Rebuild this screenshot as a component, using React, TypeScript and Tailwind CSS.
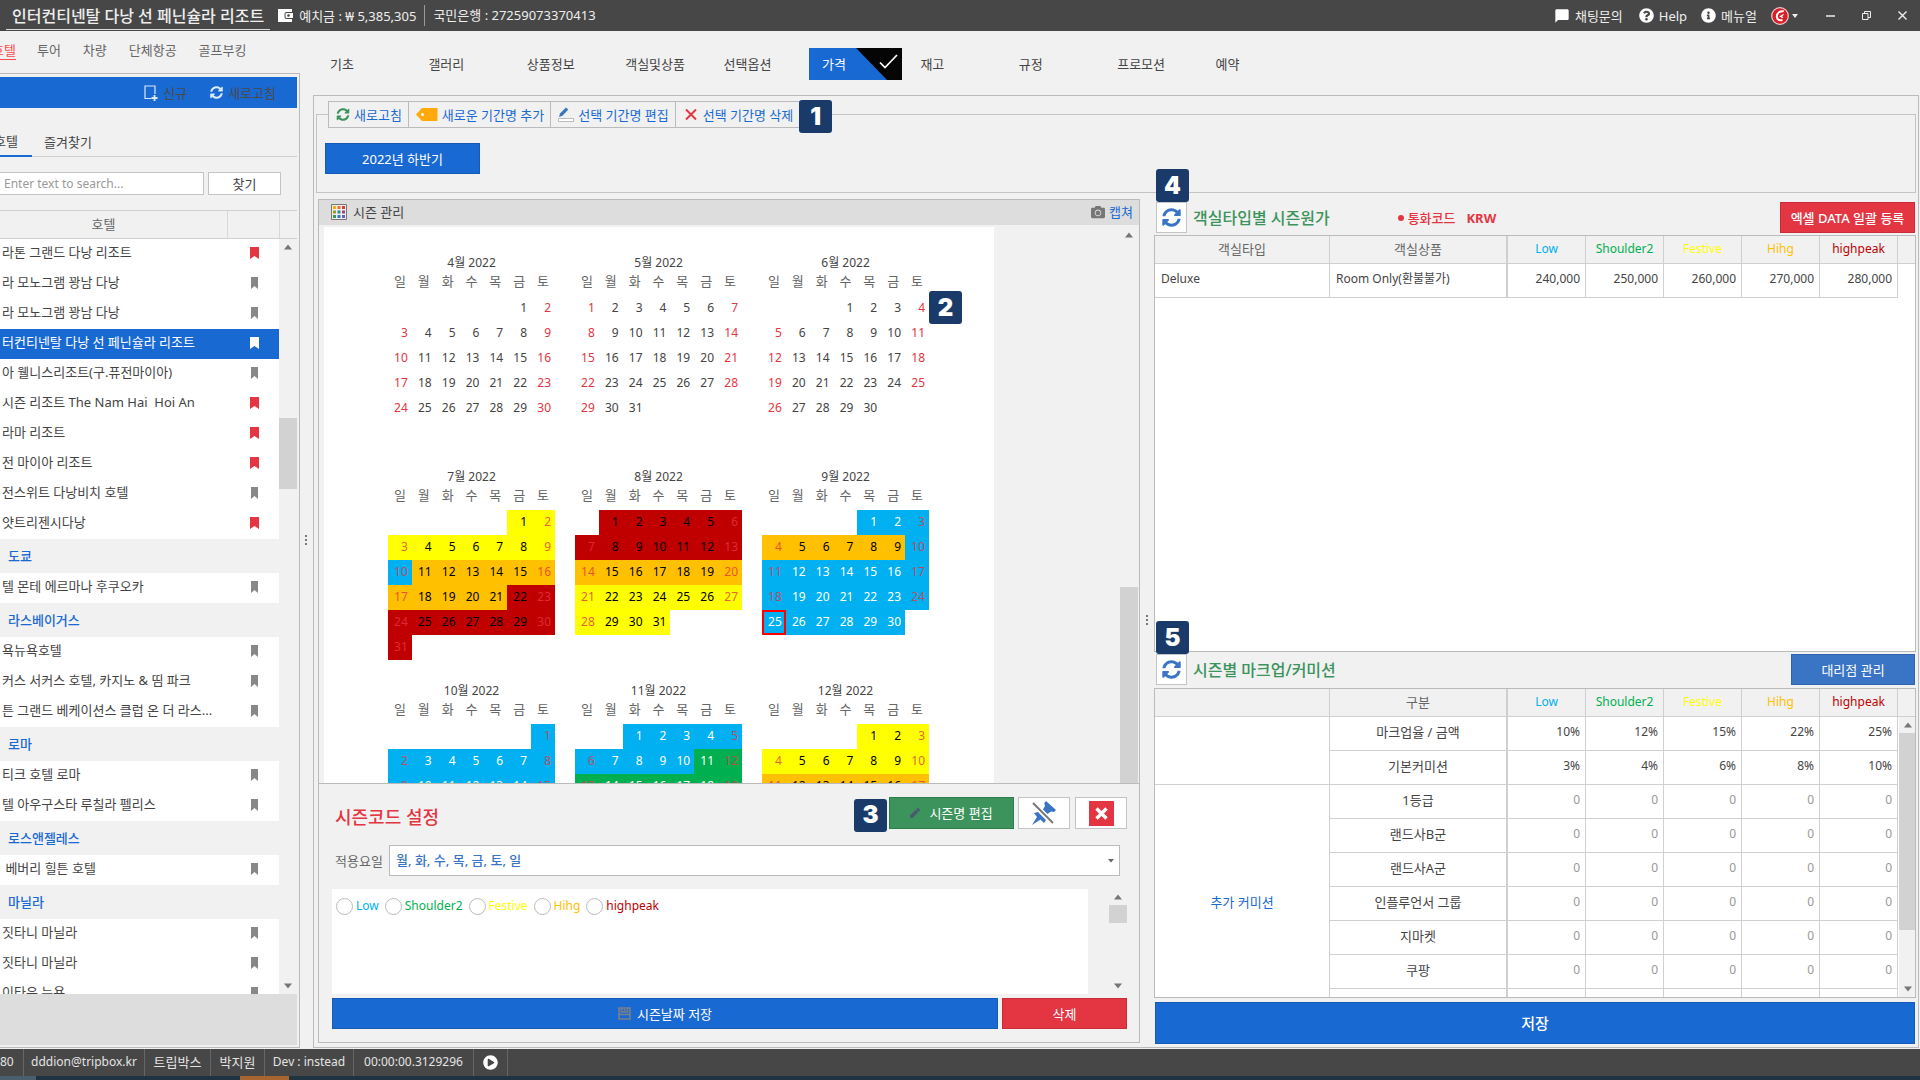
import { useState } from "react";
import type { ReactNode } from "react";
import clsx from "clsx";
import {
  FaCamera,
  FaInfoCircle,
  FaPen,
  FaPlayCircle,
  FaQuestionCircle,
  FaSyncAlt,
} from "react-icons/fa";
import { MdChatBubble } from "react-icons/md";

type Season = { name: string; text: string };

const SEASONS: Season[] = [
  { name: "Low", text: "text-[#00b0f0]" },
  { name: "Shoulder2", text: "text-[#00b050]" },
  { name: "Festive", text: "text-[#ffff00]" },
  { name: "Hihg", text: "text-[#ffc000]" },
  { name: "highpeak", text: "text-[#c00000]" },
];

const WEEKDAYS = ["일", "월", "화", "수", "목", "금", "토"];

const LOW = "bg-[#00b0f0] text-white";
const SHOULDER = "bg-[#00b050] text-white";
const FESTIVE = "bg-[#ffff00] text-black";
const HIGH = "bg-[#ffc000] text-black";
const PEAK = "bg-[#c00000] text-black";

// month -> [last day of range, cell colour]
const RANGES: Record<number, [number, string][]> = {
  7: [[9, FESTIVE], [10, LOW], [21, HIGH], [31, PEAK]],
  8: [[13, PEAK], [20, HIGH], [31, FESTIVE]],
  9: [[3, LOW], [9, HIGH], [30, LOW]],
  10: [[31, LOW]],
  11: [[10, LOW], [30, SHOULDER]],
  12: [[10, FESTIVE], [31, HIGH]],
};

type Row = { name: string; mark?: "red" | "gray" };
type Group = { title?: string; rows: Row[] };

const HOTELS: Group[] = [
  {
    rows: [
      { name: "라톤 그랜드 다낭 리조트", mark: "red" },
      { name: "라 모노그램 꽝남 다낭" },
      { name: "라 모노그램 꽝남 다낭" },
      { name: "터컨티넨탈 다낭 선 페닌슐라 리조트" },
      { name: "아 웰니스리조트(구.퓨전마이아)" },
      { name: "시즌 리조트 The Nam Hai  Hoi An", mark: "red" },
      { name: "라마 리조트", mark: "red" },
      { name: "전 마이아 리조트", mark: "red" },
      { name: "전스위트 다낭비치 호텔" },
      { name: "얏트리젠시다낭", mark: "red" },
    ],
  },
  { title: "도쿄", rows: [{ name: "텔 몬테 에르마나 후쿠오카" }] },
  {
    title: "라스베이거스",
    rows: [
      { name: "욕뉴욕호텔" },
      { name: "커스 서커스 호텔, 카지노 & 띰 파크" },
      { name: "튼 그랜드 베케이션스 클럽 온 더 라스..." },
    ],
  },
  { title: "로마", rows: [{ name: "티크 호텔 로마" }, { name: "텔 아우구스타 루칠라 펠리스" }] },
  { title: "로스앤젤레스", rows: [{ name: " 베버리 힐튼 호텔" }] },
  {
    title: "마닐라",
    rows: [{ name: "짓타니 마닐라" }, { name: "짓타니 마닐라" }, { name: "이타우 뉴욕" }],
  },
];

const MENU = ["기초", "갤러리", "상품정보", "객실및상품", "선택옵션", "가격", "재고", "규정", "프로모션", "예약"];

const MARKUP: { name: string; values: string[] }[] = [
  { name: "마크업율 / 금액", values: ["10%", "12%", "15%", "22%", "25%"] },
  { name: "기본커미션", values: ["3%", "4%", "6%", "8%", "10%"] },
  { name: "1등급", values: ["0", "0", "0", "0", "0"] },
  { name: "랜드사B군", values: ["0", "0", "0", "0", "0"] },
  { name: "랜드사A군", values: ["0", "0", "0", "0", "0"] },
  { name: "인플루언서 그룹", values: ["0", "0", "0", "0", "0"] },
  { name: "지마켓", values: ["0", "0", "0", "0", "0"] },
  { name: "쿠팡", values: ["0", "0", "0", "0", "0"] },
  { name: "", values: ["", "", "", "", ""] },
];

function Callout({ n, className }: { n: number; className?: string }) {
  return (
    <span
      className={clsx(
        "z-10 flex h-[33px] w-[33px] items-center justify-center rounded-[3px] bg-[#1a3a69] font-['Inter'] text-2xl font-black text-white",
        className
      )}
    >
      {n}
    </span>
  );
}

function Arrow({ down }: { down?: boolean }) {
  return (
    <span className="flex h-4 shrink-0 items-center justify-center">
      <svg width="8" height="6" viewBox="0 0 8 6" fill="#777">
        <path d={down ? "M0 0.5h8L4 5.5z" : "M0 5.5h8L4 0.5z"} />
      </svg>
    </span>
  );
}

function Scrollbar({ thumb, open, className }: { thumb: string; open?: boolean; className?: string }) {
  return (
    <div className={clsx("flex w-[18px] shrink-0 flex-col bg-[#f1f1f1]", className)}>
      <Arrow />
      <div className={clsx("bg-[#d2d2d2]", thumb)} />
      {!open && (
        <div className="mt-auto">
          <Arrow down />
        </div>
      )}
    </div>
  );
}

function Dots() {
  return (
    <div className="flex flex-col gap-[2px]">
      <i className="h-[2px] w-[2px] bg-[#777]" />
      <i className="h-[2px] w-[2px] bg-[#777]" />
      <i className="h-[2px] w-[2px] bg-[#777]" />
    </div>
  );
}

function TopBar() {
  return (
    <header className="flex h-[31px] shrink-0 items-center bg-[#474747] text-[#eee]">
      <h1 className="ml-[6px] mt-px flex h-[28px] items-center border-b border-[#ddd] px-[6px] text-base font-medium">
        인터컨티넨탈 다낭 선 페닌슐라 리조트
      </h1>
      <svg className="ml-2" width="15" height="13" viewBox="0 0 15 13">
        <path d="M0 0h14v3H8.500a2 2 0 0 0-2 2v3a2 2 0 0 0 2 2H14v3H0z" fill="#fff" />
        <path d="M8.500 4H15v5H8.500a1 1 0 0 1-1-1V5a1 1 0 0 1 1-1z" fill="#fff" />
        <circle cx="10.500" cy="6.500" r="1.300" fill="#474747" />
      </svg>
      <span className="ml-[6px]">예치금 : ₩ 5,385,305</span>
      <span className="ml-2 h-[21px] border-l border-[#999] pl-2 leading-[21px]">국민은행 : 27259073370413</span>
      <div className="ml-auto flex items-center">
        <button className="flex items-center gap-[5px]">
          <MdChatBubble className="h-4 w-4 text-white" />
          채팅문의
        </button>
        <button className="ml-4 flex items-center gap-[5px]">
          <FaQuestionCircle className="h-[15px] w-[15px] text-white" />
          Help
        </button>
        <button className="ml-[14px] flex items-center gap-[5px]">
          <FaInfoCircle className="h-[15px] w-[15px] text-white" />
          메뉴얼
        </button>
        <button aria-label="원격지원" className="ml-[14px] flex items-center gap-[3px]">
          <svg width="18" height="18" viewBox="0 0 18 18">
            <circle cx="9" cy="9" r="8.300" fill="#d81f26" stroke="#f3c9c9" strokeWidth="1.200" />
            <path d="M12.800 4.300C9 3.500 6 6 5.800 9.500c0 2.800 2.200 4.300 5.700 3.500" fill="none" stroke="#fff" strokeWidth="2" />
            <path d="M12.500 7.500l-3 2 2.500 1.200" fill="none" stroke="#fff" strokeWidth="1.300" />
          </svg>
          <svg width="6" height="4" viewBox="0 0 6 4" fill="#eee">
            <path d="M0 0h6L3 4z" />
          </svg>
        </button>
        <button aria-label="최소화" className="ml-[14px] flex h-[31px] w-9 items-center justify-center">
          <svg width="9" height="10" viewBox="0 0 9 10">
            <path d="M0 5h9" stroke="#eee" strokeWidth="1.500" />
          </svg>
        </button>
        <button aria-label="창 크기" className="flex h-[31px] w-9 items-center justify-center">
          <svg width="9" height="9" viewBox="0 0 9 9" fill="none" stroke="#eee">
            <path d="M.5 2.500h5.500v6H.5zM2.500 2.500V.5h6v6H6" />
          </svg>
        </button>
        <button aria-label="닫기" className="flex h-[31px] w-9 items-center justify-center">
          <svg width="9" height="9" viewBox="0 0 9 9" stroke="#eee" strokeWidth="1.400">
            <path d="M.5.5l8 8M8.500.5l-8 8" />
          </svg>
        </button>
      </div>
    </header>
  );
}

function Bookmark({ active, red }: { active: boolean; red: boolean }) {
  return (
    <span className={clsx("flex w-[9px] justify-center", active ? "text-white" : red ? "text-[#e43543]" : "text-[#888]")}>
      <svg width={active || red ? 9 : 7} height="12" viewBox="0 0 9 12" preserveAspectRatio="none" fill="currentColor">
        <path d="M0 0h9v12L4.500 9 0 12z" />
      </svg>
    </span>
  );
}

function Sidebar() {
  const [selected, setSelected] = useState("터컨티넨탈 다낭 선 페닌슐라 리조트");

  return (
    <aside className="flex w-[300px] shrink-0 flex-col overflow-hidden pb-px">
      <nav className="flex h-[42px] shrink-0 items-center gap-[22px] pb-1 text-[#666]">
        <a href="#hotel" className="-ml-2 mr-[-1px] border-b border-[#ff4d4d] leading-[18px] text-[#ff4d4d]">호텔</a>
        <a href="#tour">투어</a>
        <a href="#car">차량</a>
        <a href="#air">단체항공</a>
        <a href="#golf">골프부킹</a>
      </nav>
      <div className="flex min-h-0 flex-1 flex-col border-y border-r border-[#bbb] pb-[2px] pr-[2px] pt-[3px]">
        <div className="flex h-[31px] shrink-0 items-center justify-end gap-[23px] bg-[#1969d2] pr-[21px] text-[#4a4a4a]">
          <button className="flex items-center gap-[5px]">
            <svg width="14" height="16" viewBox="0 0 14 16" fill="none" stroke="#dbe8f8">
              <path d="M7.500 13.500H1V1h10v8" strokeWidth="1.200" />
              <path d="M10.500 10v6M7.500 13h6" strokeWidth="1.800" />
            </svg>
            신규
          </button>
          <button className="flex items-center gap-[5px]">
            <FaSyncAlt className="h-[13px] w-[13px] text-[#dbe8f8]" />
            새로고침
          </button>
        </div>
        <div className="mt-[19px] flex h-[30px] shrink-0 border-b border-[#d0d0d0]">
          <button className="-ml-2 -mb-px w-[40px] border-b-2 border-[#1969d2] pr-3">호텔</button>
          <button className="ml-3">즐겨찾기</button>
        </div>
        <div className="mt-[15px] flex h-[23px] shrink-0 gap-1 pr-4">
          <input
            aria-label="호텔 검색"
            placeholder="Enter text to search..."
            className="min-w-0 flex-1 border border-l-0 border-[#c4c4c4] bg-white pl-1 text-xs placeholder:text-[#999]"
          />
          <button className="w-[73px] border border-[#c4c4c4] bg-white">찾기</button>
        </div>
        <div className="mt-[15px] flex h-[29px] shrink-0 items-stretch border-y border-[#d0d0d0] text-[#666]">
          <span className="flex flex-1 items-center justify-center border-r border-[#d8d8d8] pb-[2px] pr-5">호텔</span>
          <span className="w-[52px] border-r border-[#d8d8d8]" />
          <span className="w-[17px]" />
        </div>
        <div className="flex min-h-0 flex-1">
          <div className="min-w-0 flex-1 overflow-hidden">
            {HOTELS.map((group, gi) => (
              <section key={gi}>
                {group.title && (
                  <h3 className="flex h-[34px] items-center pb-px pl-2 font-medium text-[#1969d2]">{group.title}</h3>
                )}
                {group.rows.map((row, i) => {
                  const active = row.name === selected;
                  return (
                    <button
                      key={i}
                      onClick={() => setSelected(row.name)}
                      className={clsx(
                        "flex h-[30px] w-full items-center whitespace-pre pb-[2px] pl-[2px] pr-5 text-left",
                        active ? "bg-[#1969d2] text-white" : "bg-white"
                      )}
                    >
                      <span className="min-w-0 flex-1 pb-[2px]">{row.name}</span>
                      <Bookmark active={active} red={row.mark === "red"} />
                    </button>
                  );
                })}
              </section>
            ))}
          </div>
          <Scrollbar thumb="mt-[163px] h-[71px]" />
        </div>
        <div className="h-[51px] shrink-0 bg-[#ddd]" />
      </div>
    </aside>
  );
}

function MenuTabs() {
  const [tab, setTab] = useState("가격");
  return (
    <nav className="h-[64px] shrink-0 pt-[17px]">
      <div className="ml-1 grid h-8 w-[984px] grid-cols-10">
        {MENU.map((m) => (
          <button
            key={m}
            onClick={() => setTab(m)}
            className={clsx(
              "mr-[5px] flex items-center justify-between whitespace-nowrap pl-[13px]",
              m === tab && "bg-[#1969d2] text-white"
            )}
          >
            {m}
            {m === tab && (
              <svg width="46" height="32" viewBox="0 0 46 32">
                <path d="M0 0h46v32H31z" fill="#050505" />
                <path d="M24 14.500l5 5L41 7" fill="none" stroke="#fff" strokeWidth="1.700" />
              </svg>
            )}
          </button>
        ))}
      </div>
    </nav>
  );
}

function ToolButton({ icon, children }: { icon: ReactNode; children: ReactNode }) {
  return (
    <button className="flex h-[25px] items-center gap-1 whitespace-nowrap border-r border-[#bbb] pl-[7px] pr-[6px] last-of-type:border-r-0">
      {icon}
      {children}
    </button>
  );
}

function PeriodBox() {
  return (
    <fieldset className="mx-[2px] shrink-0 border border-[#c4c4c4] pb-[18px] pl-2 pt-[15px]">
      <legend className="relative ml-[3px] flex w-fit border border-[#bbb] bg-[#f1f1f1] text-[#1969d2]">
        <ToolButton icon={<FaSyncAlt className="h-[13px] w-[14px] text-[#3c935c]" />}>새로고침</ToolButton>
        <ToolButton
          icon={
            <svg width="22" height="13" viewBox="0 0 22 13">
              <path d="M6 0h15.500v13H6L0 6.500z" fill="#ffa90a" />
              <circle cx="6.500" cy="6.500" r="1.500" fill="#fff" />
            </svg>
          }
        >
          새로운 기간명 추가
        </ToolButton>
        <ToolButton
          icon={
            <svg width="16" height="15" viewBox="0 0 16 15">
              <path d="M1 10l1-3.500L8 0.500l2.300 2L4.500 8.800z" fill="#3a74c4" />
              <path d="M.5 11.500h15v3H.5z" fill="#fff" stroke="#bbb" />
            </svg>
          }
        >
          선택 기간명 편집
        </ToolButton>
        <ToolButton
          icon={
            <svg className="mx-[2px]" width="12" height="11" viewBox="0 0 12 11" stroke="#e43543" strokeWidth="2">
              <path d="M1 .5l10 10M11 .5l-10 10" />
            </svg>
          }
        >
          선택 기간명 삭제
        </ToolButton>
        <Callout n={1} className="absolute -top-[2px] left-full" />
      </legend>
      <button className="h-[31px] w-[155px] border border-[#155ab5] bg-[#1969d2] text-white">2022년 하반기</button>
    </fieldset>
  );
}

function Month({ month }: { month: number }) {
  const first = new Date(2022, month - 1, 1).getDay();
  const days = new Date(2022, month, 0).getDate();
  const ranges = RANGES[month];

  return (
    <div className="relative h-[192px]">
      <table className="w-full table-fixed border-collapse">
        <caption className="h-[18px] text-xs leading-[18px]">{month}월 2022</caption>
        <thead>
          <tr className="h-6 align-top">
            {WEEKDAYS.map((d) => (
              <th key={d} className="p-0 font-normal leading-[18px] text-[#666]">
                {d}
              </th>
            ))}
          </tr>
        </thead>
        <tbody>
          {[0, 1, 2, 3, 4, 5].map((w) => (
            <tr key={w} className="h-[25px]">
              {WEEKDAYS.map((_, i) => {
                const day = w * 7 + i - first + 1;
                if (day < 1 || day > days) return <td key={i} className="p-0" />;
                const today = month === 9 && day === 25;
                const weekend = i === 0 || i === 6;
                const fill = ranges?.find(([last]) => day <= last)?.[1];
                return (
                  <td
                    key={i}
                    className={clsx("pb-px pl-0 pr-1 pt-0 text-right text-xs", fill, today && "ring-2 ring-inset ring-[#ff0000]")}
                  >
                    <span className={clsx(weekend && !today && (fill ? "text-[#e43543]/80" : "text-[#e43543]"))}>{day}</span>
                  </td>
                );
              })}
            </tr>
          ))}
        </tbody>
      </table>
      {month === 6 && <Callout n={2} className="absolute left-full top-[37px]" />}
    </div>
  );
}

function SeasonPanel() {
  const [season, setSeason] = useState("");

  return (
    <section className="mb-1 mt-[6px] flex min-w-0 flex-1 flex-col border border-[#bbb]">
      <div className="flex h-[25px] shrink-0 items-center bg-[#ddd] pb-[2px] pl-3 pr-[6px]">
        <svg width="16" height="16" viewBox="0 0 16 16">
          <path d="M.5.5h15v15H.5z" fill="#eee" stroke="#777" />
          <path d="M2 2h3v3H2z" fill="#ffa90a" />
          <path d="M6.500 2h3v3h-3z" fill="#f0702a" />
          <path d="M11 2h3v3h-3z" fill="#e43543" />
          <path d="M2 6.500h3v3H2z" fill="#9a9a20" />
          <path d="M6.500 6.500h3v3h-3z" fill="#2f8594" />
          <path d="M11 6.500h3v3h-3z" fill="#9a4580" />
          <path d="M2 11h3v3H2z" fill="#3c935c" />
          <path d="M6.500 11h3v3h-3z" fill="#2f74d0" />
          <path d="M11 11h3v3h-3z" fill="#6a60b0" />
        </svg>
        <h2 className="ml-[6px]">시즌 관리</h2>
        <button className="ml-auto flex items-center gap-1 text-[#1969d2]">
          <FaCamera className="h-[14px] w-[14px] text-[#777]" />
          캡쳐
        </button>
      </div>

      <div className="flex min-h-0 flex-1 justify-between overflow-hidden border-b border-[#bbb] pl-[5px] pr-px pt-[2px]">
        <div className="grid w-[670px] auto-rows-max grid-cols-[167px_167px_167px] gap-x-5 gap-y-[22px] bg-white pl-16 pt-[27px]">
          {[4, 5, 6, 7, 8, 9, 10, 11, 12].map((m) => (
            <Month key={m} month={m} />
          ))}
        </div>
        <Scrollbar open thumb="mt-[344px] flex-1" />
      </div>

      <div className="shrink-0 py-[13px] pl-[13px] pr-3">
        <div className="flex h-[32px] items-center">
          <h2 className="mr-auto pl-[3px] pt-2 text-lg font-medium text-[#e43543]">시즌코드 설정</h2>
          <Callout n={3} className="mr-[2px] mt-1" />
          <button className="flex h-[32px] w-[125px] items-center justify-center gap-[9px] border border-[#2f7d49] bg-[#3c935c] text-white">
            <FaPen className="h-[10px] w-[10px] text-[#4a5a6a]" />
            시즌명 편집
          </button>
          <button aria-label="고정 해제" className="ml-1 flex h-[32px] w-[52px] items-center justify-center border border-[#c4c4c4] bg-white">
            <svg width="26" height="26" viewBox="0 0 26 26">
              <path d="M15 1l10 9-2 2-3-.5-5 3.500-4-4 3-5-.7-3zM3 13l4-1 8 8-2 3-3.500-3.500L1 25l5-8z" fill="#3a74c4" />
              <path d="M1 2l21 21" stroke="#fff" strokeWidth="5" />
              <path d="M2 3l20 20" stroke="#777" strokeWidth="2" />
            </svg>
          </button>
          <button aria-label="닫기" className="ml-[5px] flex h-[32px] w-[52px] items-center justify-center border border-[#c4c4c4] bg-white">
            <svg width="25" height="25" viewBox="0 0 25 25">
              <path d="M0 0h25v25H0z" fill="#e43543" />
              <path d="M7.500 7.500l10 10M17.500 7.500l-10 10" stroke="#fff" strokeWidth="3.400" />
            </svg>
          </button>
        </div>

        <div className="mt-4 flex h-[31px] items-center pl-[3px] pr-[7px]">
          <label htmlFor="weekdays" className="w-[54px] shrink-0 text-[#666]">
            적용요일
          </label>
          <div className="relative flex-1">
            <select
              id="weekdays"
              className="h-[31px] w-full appearance-none border border-[#bbb] bg-white pb-[2px] pl-[6px] font-medium text-[#3a74c4]"
            >
              <option>월, 화, 수, 목, 금, 토, 일</option>
            </select>
            <svg className="pointer-events-none absolute right-[6px] top-[14px]" width="6" height="4" viewBox="0 0 6 4" fill="#666">
              <path d="M0 0h6L3 3.500z" />
            </svg>
          </div>
        </div>

        <div className="mt-[13px] flex h-[105px]">
          <div className="flex flex-1 items-start gap-[6px] bg-white pl-1 pt-2">
            {SEASONS.map((s) => (
              <label key={s.name} className={clsx("flex h-[18px] items-center gap-[3px] text-xs", s.text)}>
                <input
                  type="radio"
                  name="season"
                  checked={season === s.name}
                  onChange={() => setSeason(s.name)}
                  className="h-[17px] w-[17px] appearance-none rounded-full border border-[#bbb] bg-white checked:border-4 checked:border-[#1969d2]"
                />
                {s.name}
              </label>
            ))}
          </div>
          <Scrollbar className="ml-[21px]" thumb="h-[18px]" />
        </div>

        <div className="mt-1 flex h-[31px] gap-1">
          <button className="flex flex-1 items-center justify-center gap-[6px] border border-[#155ab5] bg-[#1969d2] text-white">
            <svg width="13" height="13" viewBox="0 0 13 13" fill="none" stroke="#7b7f86" strokeWidth="1.600">
              <path d="M1 1h11v11H1zM3.500 1v4h6V1M1 7.500h11M6.500 2v2" />
            </svg>
            시즌날짜 저장
          </button>
          <button className="w-[125px] border border-[#c92b38] bg-[#e43543] text-white">삭제</button>
        </div>
      </div>
    </section>
  );
}

function SeasonCols() {
  return (
    <colgroup>
      <col className="w-[175px]" />
      <col className="w-[178px]" />
      {SEASONS.map((s) => (
        <col key={s.name} className="w-[78px]" />
      ))}
      <col />
    </colgroup>
  );
}

const TH = "border-b border-r border-[#cfcfcf] bg-[#f1f1f1] px-0 pb-[2px] pt-0 font-normal";
const TD = "border-b border-r border-[#d0d0d0] bg-white pb-[3px] pt-0";

function SeasonHead({ first, second }: { first: string; second: string }) {
  return (
    <thead>
      <tr className="h-[28px] text-[#666]">
        <th className={TH}>{first}</th>
        <th className={clsx(TH, "border-r-2")}>{second}</th>
        {SEASONS.map((s) => (
          <th key={s.name} className={clsx(TH, "text-xs", s.text)}>
            {s.name}
          </th>
        ))}
        <th aria-label="스크롤" className="border-b border-[#cfcfcf] bg-[#f1f1f1] p-0" />
      </tr>
    </thead>
  );
}

function CardTitle({ n, title, children }: { n: number; title: string; children: ReactNode }) {
  return (
    <div className="relative flex h-[31px] shrink-0 items-center pl-[2px] pr-px">
      <Callout n={n} className="absolute bottom-full left-[2px]" />
      <button aria-label={title + " 새로고침"} className="flex h-[31px] w-[31px] items-center justify-center border border-[#c4c4c4] bg-white">
        <FaSyncAlt className="h-[19px] w-[19px] text-[#3a74c4]" />
      </button>
      <h2 className="ml-[6px] text-base font-medium text-[#3c935c]">{title}</h2>
      {children}
    </div>
  );
}

function PricePanel() {
  return (
    <section className="mr-[2px] flex w-[762px] shrink-0 flex-col pb-[3px] pt-[9px]">
      <CardTitle n={4} title="객실타입별 시즌원가">
        <span className="ml-[68px] flex items-center gap-1 font-medium text-[#e43543]">
          <i className="h-[6px] w-[6px] rounded-full bg-[#e43543]" />
          통화코드
        </span>
        <b className="ml-[11px] text-[13px] text-[#e43543]">KRW</b>
        <button className="ml-auto h-[31px] w-[135px] border border-[#c92b38] bg-[#e43543] font-medium text-white">
          엑셀 DATA 일괄 등록
        </button>
      </CardTitle>

      <div className="mt-[2px] min-h-0 flex-1 border border-[#bbb] bg-white">
        <table className="w-full table-fixed border-separate border-spacing-0">
          <SeasonCols />
          <SeasonHead first="객실타입" second="객실상품" />
          <tbody>
            <tr className="h-[34px] text-xs">
              <td className={clsx(TD, "pl-[6px]")}>Deluxe</td>
              <td className={clsx(TD, "border-r-2 pl-[6px]")}>Room Only(환불불가)</td>
              {["240,000", "250,000", "260,000", "270,000", "280,000"].map((p) => (
                <td key={p} className={clsx(TD, "pr-[5px] text-right")}>
                  {p}
                </td>
              ))}
              <td />
            </tr>
          </tbody>
        </table>
      </div>

      <div className="mt-[2px]">
        <CardTitle n={5} title="시즌별 마크업/커미션">
          <button className="ml-auto h-[31px] w-[124px] border border-[#2f63ad] bg-[#3a74c4] text-white">대리점 관리</button>
        </CardTitle>
      </div>

      <div className="mt-[3px] h-[310px] shrink-0 overflow-hidden border border-[#bbb] bg-white">
        <table className="w-full table-fixed border-separate border-spacing-0">
          <SeasonCols />
          <SeasonHead first="" second="구분" />
          <tbody>
            {MARKUP.map((row, i) => (
              <tr key={i} className="h-[34px]">
                {i === 0 && <td rowSpan={2} className={TD} />}
                {i === 2 && (
                  <td rowSpan={7} className={clsx(TD, "text-center text-[#1969d2]")}>
                    추가 커미션
                  </td>
                )}
                <td className={clsx(TD, "border-r-2 text-center")}>{row.name}</td>
                {row.values.map((v, k) => (
                  <td key={k} className={clsx(TD, "pr-[5px] text-right text-xs", i > 1 && "text-[#999]")}>
                    {v}
                  </td>
                ))}
                {i === 0 && (
                  <td rowSpan={9} className="p-0 align-top">
                    <Scrollbar className="ml-px h-[280px]" thumb="h-[197px]" />
                  </td>
                )}
              </tr>
            ))}
          </tbody>
        </table>
      </div>

      <button className="mx-px mt-1 h-[42px] shrink-0 border border-[#155ab5] bg-[#1969d2] text-[15px] font-medium text-white">
        저장
      </button>
    </section>
  );
}

function StatusBar() {
  return (
    <footer className="shrink-0">
      <div className="flex h-[27px] items-stretch bg-[#474747] text-xs leading-[26px] text-[#e4e4e4]">
        <span className="w-6 border-r border-[#666]">80</span>
        <span className="w-[121px] border-r border-[#666] text-center">dddion@tripbox.kr</span>
        <span className="w-[66px] border-r border-[#666] text-center text-[13px]">트립박스</span>
        <span className="w-[54px] border-r border-[#666] text-center text-[13px]">박지원</span>
        <span className="w-[89px] border-r border-[#666] text-center">Dev : instead</span>
        <span className="w-[120px] border-r border-[#666] text-center">00:00:00.3129296</span>
        <button aria-label="실행" className="flex w-[34px] items-center justify-center border-r border-[#666]">
          <FaPlayCircle className="h-[15px] w-[15px] text-white" />
        </button>
      </div>
      {/* top edge of the OS task bar */}
      <div className="flex h-1 bg-[#1f3440]">
        <i className="w-9 bg-[#4a5f6d]" />
        <i className="ml-[204px] w-[49px] bg-[#a8652f]" />
      </div>
    </footer>
  );
}

export default function App() {
  return (
    <div className="flex h-screen flex-col overflow-hidden bg-[#f1f1f1] font-['Noto_Sans','Noto_Sans_CJK_KR',sans-serif] text-[13px] leading-[18px] text-[#444]">
      <TopBar />
      <div className="flex min-h-0 flex-1">
        <Sidebar />
        <div className="flex w-[13px] shrink-0 items-center justify-center pr-[2px]">
          <Dots />
        </div>
        <main className="flex min-w-0 flex-1 flex-col pb-px pr-px">
          <MenuTabs />
          <div className="flex min-h-0 flex-1 flex-col border border-[#bbb] pt-[5px]">
            <PeriodBox />
            <div className="flex min-h-0 flex-1 pl-1">
              <SeasonPanel />
              <div className="flex w-[14px] shrink-0 items-center justify-center">
                <Dots />
              </div>
              <PricePanel />
            </div>
          </div>
        </main>
      </div>
      <StatusBar />
    </div>
  );
}
